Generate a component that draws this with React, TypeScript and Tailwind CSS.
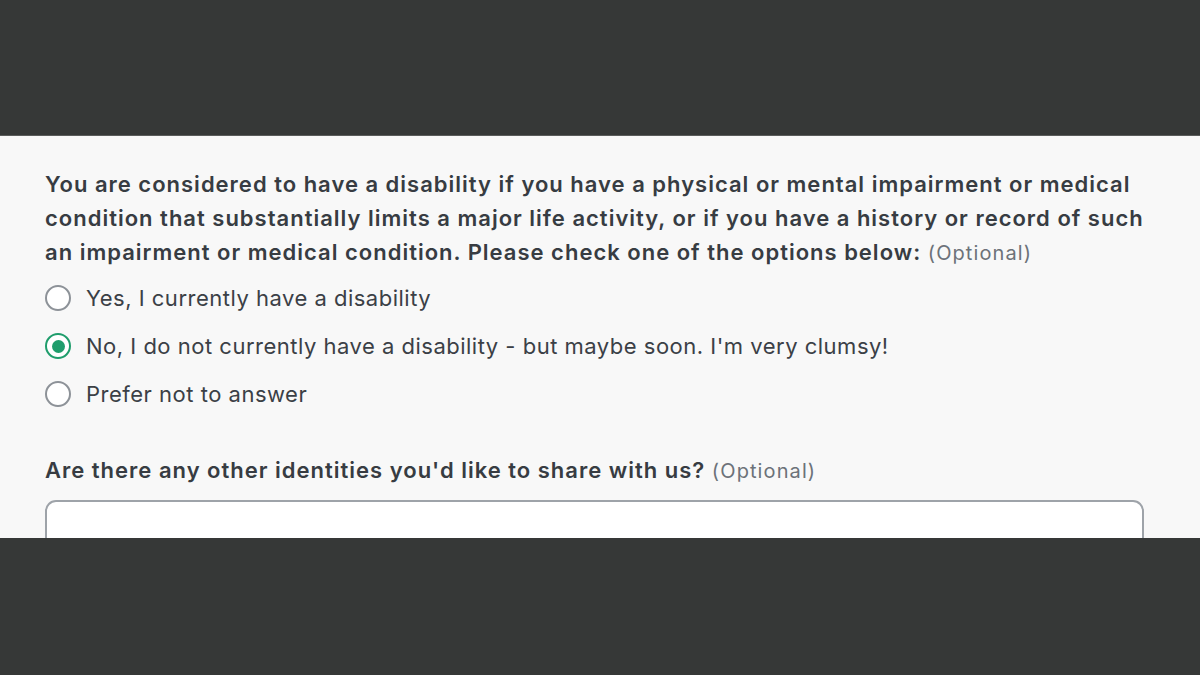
import React from "react";

const options = [
    { label: "Yes, I currently have a disability", checked: false },
    { label: "No, I do not currently have a disability - but maybe soon. I'm very clumsy!", checked: true },
    { label: "Prefer not to answer", checked: false },
];

function Radio({ checked }: { checked: boolean }) {
    if (checked) {
        return (
            <span className="flex h-[26px] w-[26px] shrink-0 items-center justify-center rounded-full border-[2.5px] border-[#1f9d6c] bg-white">
                <span className="h-[13px] w-[13px] rounded-full bg-[#1f9d6c]" />
            </span>
        );
    }
    return <span className="h-[26px] w-[26px] shrink-0 rounded-full border-2 border-[#8d9298] bg-white" />;
}

export default function App() {
    return (
        <div className="flex h-[675px] w-[1200px] flex-col bg-[#363837] font-['Inter',sans-serif]">
            <div className="h-[135px] shrink-0" />

            <div className="h-[403px] shrink-0 overflow-hidden border-t border-[#5a5c5b] bg-[#f8f8f8] px-[45px]">
                <div className="pt-[31px]">
                    <p className="text-[22px] font-semibold leading-[34px] tracking-[1px] text-[#373c42]">
                        You are considered to have a disability if you have a physical or mental impairment or medical
                        condition that substantially limits a major life activity, or if you have a history or record of
                        such an impairment or medical condition. Please check one of the options below:{" "}
                        <span className="text-[20px] font-normal tracking-[1.1px] text-[#6c7279]">(Optional)</span>
                    </p>

                    <div className="mt-[15px] flex flex-col gap-[22px]">
                        {options.map((opt) => (
                            <label key={opt.label} className="flex items-center gap-[15px]">
                                <Radio checked={opt.checked} />
                                <span className="text-[22px] leading-[26px] tracking-[0.5px] text-[#3b4046]">{opt.label}</span>
                            </label>
                        ))}
                    </div>

                    <p className="mt-[46px] text-[22px] font-semibold leading-[34px] tracking-[1px] text-[#373c42]">
                        Are there any other identities you'd like to share with us?{" "}
                        <span className="text-[20px] font-normal tracking-[1.1px] text-[#6c7279]">(Optional)</span>
                    </p>

                    <div className="mt-[12px] h-[80px] w-[1099px] rounded-[11px] border-2 border-[#9ea3a9] bg-white" />
                </div>
            </div>

            <div className="flex-1" />
        </div>
    );
}
